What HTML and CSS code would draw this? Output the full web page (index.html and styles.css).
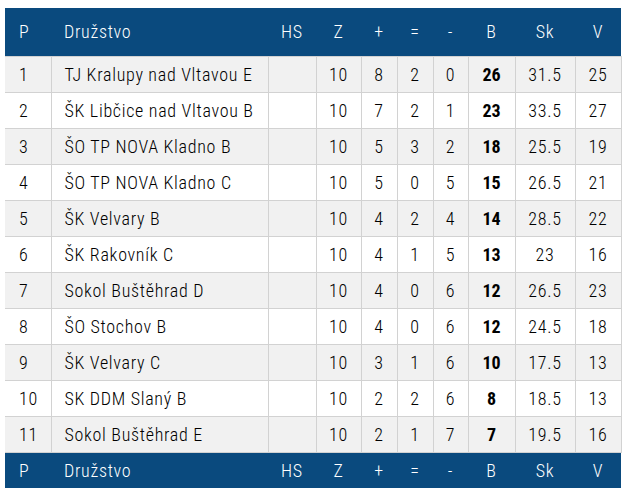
FILE: index.html
```html
<!DOCTYPE html>
<html lang="cs">
<head>
<meta charset="utf-8">
<link rel="stylesheet" href="styles.css">
</head>
<body>
<div class="wrap">
<table class="standings">
<colgroup>
<col class="c-p"><col class="c-team"><col class="c-hs"><col class="c-z"><col class="c-w"><col class="c-d"><col class="c-l"><col class="c-b"><col class="c-sk"><col class="c-v">
</colgroup>
<thead>
<tr><th>P</th><th class="left">Družstvo</th><th>HS</th><th>Z</th><th>+</th><th>=</th><th>-</th><th>B</th><th>Sk</th><th>V</th></tr>
</thead>
<tbody>
<tr><td>1</td><td class="left">TJ Kralupy nad Vltavou E</td><td></td><td>10</td><td>8</td><td>2</td><td>0</td><td class="pts">26</td><td>31.5</td><td>25</td></tr>
<tr><td>2</td><td class="left">ŠK Libčice nad Vltavou B</td><td></td><td>10</td><td>7</td><td>2</td><td>1</td><td class="pts">23</td><td>33.5</td><td>27</td></tr>
<tr><td>3</td><td class="left">ŠO TP NOVA Kladno B</td><td></td><td>10</td><td>5</td><td>3</td><td>2</td><td class="pts">18</td><td>25.5</td><td>19</td></tr>
<tr><td>4</td><td class="left">ŠO TP NOVA Kladno C</td><td></td><td>10</td><td>5</td><td>0</td><td>5</td><td class="pts">15</td><td>26.5</td><td>21</td></tr>
<tr><td>5</td><td class="left">ŠK Velvary B</td><td></td><td>10</td><td>4</td><td>2</td><td>4</td><td class="pts">14</td><td>28.5</td><td>22</td></tr>
<tr><td>6</td><td class="left">ŠK Rakovník C</td><td></td><td>10</td><td>4</td><td>1</td><td>5</td><td class="pts">13</td><td>23</td><td>16</td></tr>
<tr><td>7</td><td class="left">Sokol Buštěhrad D</td><td></td><td>10</td><td>4</td><td>0</td><td>6</td><td class="pts">12</td><td>26.5</td><td>23</td></tr>
<tr><td>8</td><td class="left">ŠO Stochov B</td><td></td><td>10</td><td>4</td><td>0</td><td>6</td><td class="pts">12</td><td>24.5</td><td>18</td></tr>
<tr><td>9</td><td class="left">ŠK Velvary C</td><td></td><td>10</td><td>3</td><td>1</td><td>6</td><td class="pts">10</td><td>17.5</td><td>13</td></tr>
<tr><td>10</td><td class="left">SK DDM Slaný B</td><td></td><td>10</td><td>2</td><td>2</td><td>6</td><td class="pts">8</td><td>18.5</td><td>13</td></tr>
<tr><td>11</td><td class="left">Sokol Buštěhrad E</td><td></td><td>10</td><td>2</td><td>1</td><td>7</td><td class="pts">7</td><td>19.5</td><td>16</td></tr>
</tbody>
<tfoot>
<tr><th>P</th><th class="left">Družstvo</th><th>HS</th><th>Z</th><th>+</th><th>=</th><th>-</th><th>B</th><th>Sk</th><th>V</th></tr>
</tfoot>
</table>
</div>
</body>
</html>
```
FILE: styles.css
```css
html, body {
  margin: 0;
  padding: 0;
  background: #ffffff;
}
.wrap {
  padding: 8px 0 0 5px;
}
.standings {
  border-collapse: collapse;
  table-layout: fixed;
  width: 616px;
  font-family: Roboto, "Liberation Sans", sans-serif;
  font-stretch: condensed;
  font-weight: 300;
  letter-spacing: 0.7px;
  font-size: 18px;
  color: #000000;
}
.c-p { width: 46px; }
.c-team { width: 217px; }
.c-hs { width: 48px; }
.c-z { width: 45px; }
.c-w { width: 36px; }
.c-d { width: 36px; }
.c-l { width: 35px; }
.c-b { width: 47px; }
.c-sk { width: 60px; }
.c-v { width: 46px; }
.standings th {
  background: #0a4a7e;
  color: #ffffff;
  font-weight: 300;
  text-align: center;
  padding: 0;
  border: none;
}
.standings thead tr { height: 48px; }
.standings tfoot tr { height: 36px; }
.standings td {
  text-align: center;
  padding: 0;
  border: 1px solid #d2d2d2;
  height: 35px;
}
.standings td:first-child { border-left: none; }
.standings tbody tr:nth-child(odd) td { background: #f1f1f1; }
.standings tbody tr:nth-child(even) td { background: #ffffff; }
.standings .left {
  text-align: left;
  padding-left: 13px;
}
.standings th:first-child,
.standings td:first-child {
  text-align: left;
  padding-left: 14px;
}
.standings .pts { font-weight: 700; letter-spacing: 0; }
```
